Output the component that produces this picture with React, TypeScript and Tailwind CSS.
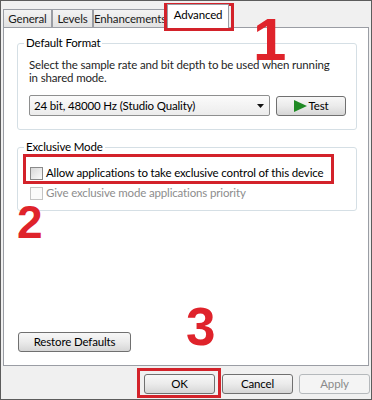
const tabs = [
  { label: "General", w: "w-[49px]" },
  { label: "Levels", w: "w-[41px]" },
  { label: "Enhancements", w: "w-[74px]" },
];

function WinButton({
  children,
  className = "",
  disabled = false,
}: {
  children: React.ReactNode;
  className?: string;
  disabled?: boolean;
}) {
  return (
    <button
      disabled={disabled}
      className={`flex h-[20px] items-center justify-center rounded-[3px] border ${
        disabled
          ? "border-[#b5b9bc] bg-[#f4f4f4] text-[#8a8a8a]"
          : "border-[#707070] bg-gradient-to-b from-[#f7f7f7] via-[#ebebeb] to-[#d6d6d6] text-black"
      } ${className}`}
    >
      {children}
    </button>
  );
}

function CheckRow({ label, disabled = false }: { label: string; disabled?: boolean }) {
  return (
    <label className="flex h-[20px] items-center">
      <span
        className={`h-[13px] w-[13px] shrink-0 border ${
          disabled
            ? "border-[#c4c4c4] bg-[#fafafa]"
            : "border-[#8a8a8a] bg-gradient-to-br from-[#d8d8d8] to-[#fbfbfb]"
        }`}
      />
      <span className={`ml-[3px] ${disabled ? "text-[#8d8d8d]" : "text-black"}`}>{label}</span>
    </label>
  );
}

export default function App() {
  return (
    <div className="relative h-[400px] w-[372px] overflow-hidden whitespace-nowrap border border-[#5c5c5c] bg-[#f0f0f0] font-['Lato','Open_Sans',sans-serif] text-[11.5px] leading-[16px] tracking-[-0.15px] text-black">
      {/* tab strip */}
      <div className="flex h-[26px] items-end pl-[2px]">
        {tabs.map((t) => (
          <div
            key={t.label}
            className={`flex h-[18px] ${t.w} items-center justify-center border border-b-0 border-[#9a9da4] bg-gradient-to-b from-[#f3f3f3] to-[#e2e2e2] text-[#1a1a1a]`}
          >
            {t.label}
          </div>
        ))}
        <div className="relative z-10 -mb-px flex h-[24px] w-[62px] items-start justify-center border border-b-0 border-[#9a9da4] bg-white pt-[2px]">
          Advanced
        </div>
      </div>

      {/* panel */}
      <div className="ml-[2px] flex h-[339px] w-[366px] flex-col border border-[#9a9da4] bg-white">
        <fieldset className="ml-[13px] mt-[7px] w-[340px] rounded-[3px] border border-[#d5dfe5] pb-[13px] pl-[11px]">
          <legend className="-ml-[5px] px-[2px] leading-[16px]">Default Format</legend>
          <p className="mt-[7px] leading-[13px] text-[#1e1e1e]">
            Select the sample rate and bit depth to be used when running
            <br />
            in shared mode.
          </p>
          <div className="mt-[11px] flex items-center">
            <div className="flex h-[21px] w-[241px] items-center justify-between rounded-[2px] border border-[#8e8f8f] bg-gradient-to-b from-[#fbfbfb] to-[#ececec] pl-[4px] pr-[5px]">
              <span>24 bit, 48000 Hz (Studio Quality)</span>
              <svg width="7" height="4" viewBox="0 0 7 4">
                <polygon points="0,0 7,0 3.5,4" fill="#111" />
              </svg>
            </div>
            <WinButton className="ml-[6px] w-[70px] gap-[2px]">
              <svg width="13" height="12" viewBox="0 0 13 12">
                <polygon points="0,0 13,6 0,12" fill="#1f8a24" />
              </svg>
              <span>Test</span>
            </WinButton>
          </div>
        </fieldset>

        <fieldset className="ml-[13px] mt-[9px] w-[340px] rounded-[3px] border border-[#d5dfe5] pb-[7px] pl-[12px]">
          <legend className="-ml-[6px] px-[2px] leading-[16px]">Exclusive Mode</legend>
          <div className="mt-[8px]">
            <CheckRow label="Allow applications to take exclusive control of this device" />
            <CheckRow label="Give exclusive mode applications priority" disabled />
          </div>
        </fieldset>

        <WinButton className="mb-[13px] ml-[14px] mt-auto w-[113px]">Restore Defaults</WinButton>
      </div>

      {/* dialog buttons */}
      <div className="flex justify-end pr-[1px] pt-[8px]">
        <WinButton className="w-[71px]">OK</WinButton>
        <WinButton className="ml-[7px] w-[71px]">Cancel</WinButton>
        <WinButton className="ml-[6px] w-[71px]" disabled>
          Apply
        </WinButton>
      </div>

      {/* annotations */}
      <div className="pointer-events-none absolute left-[163px] top-[2px] h-[28px] w-[70px] border-[3px] border-[#d3222a]" />
      <div className="pointer-events-none absolute left-[22px] top-[153px] h-[30px] w-[311px] border-[3px] border-[#d3222a]" />
      <div className="pointer-events-none absolute left-[136px] top-[367px] h-[30px] w-[84px] border-[3px] border-[#d3222a]" />
      <span className="absolute left-[252px] top-[19px] font-['Liberation_Sans',Arial,sans-serif] text-[60px] font-bold leading-[40px] tracking-normal text-[#df232b]">
        1
      </span>
      <span className="absolute left-[16px] top-[198px] font-['Liberation_Sans',Arial,sans-serif] text-[46px] font-bold leading-none tracking-normal text-[#df232b]">
        2
      </span>
      <span className="absolute left-[185px] top-[299px] font-['Liberation_Sans',Arial,sans-serif] text-[53px] font-bold leading-none tracking-normal text-[#df232b]">
        3
      </span>
    </div>
  );
}
